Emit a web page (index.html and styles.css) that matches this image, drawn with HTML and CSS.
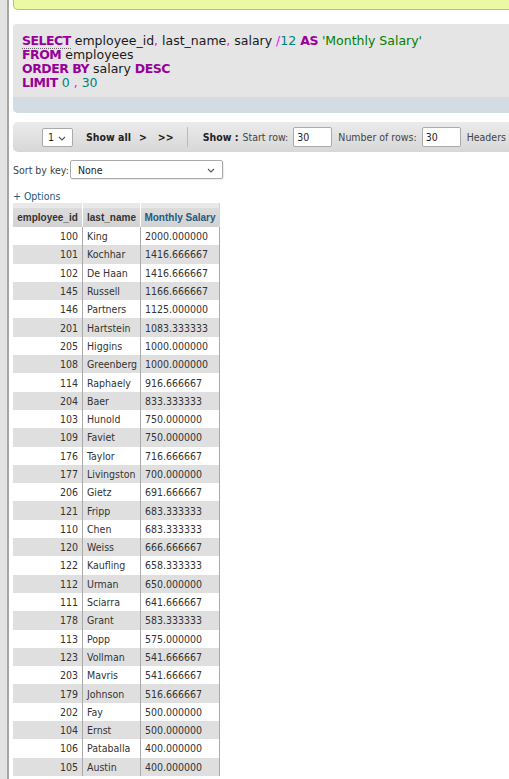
FILE: index.html
```html
<!DOCTYPE html>
<html>
<head>
<meta charset="utf-8">
<link rel="stylesheet" href="styles.css">
</head>
<body>
<div class="page">
  <div class="gutter"></div>
  <div class="main">
    <div class="msg"></div>
    <div class="sqlbox">
      <div class="sql">
        <div><span class="kw sel">SELECT</span> employee_id<span class="pu">,</span> last_name<span class="pu">,</span> salary <span class="pu">/</span><span class="nu">12</span> <span class="kw">AS</span> <span class="st">'Monthly Salary'</span></div>
        <div><span class="kw">FROM</span> employees</div>
        <div><span class="kw">ORDER BY</span> salary <span class="kw">DESC</span></div>
        <div><span class="kw">LIMIT</span> <span class="nu">0</span> <span class="pu">,</span> <span class="nu">30</span></div>
      </div>
      <div class="sqlfoot"></div>
    </div>

    <div class="navbar">
      <span class="dd dd-page">1<svg class="chev" width="8" height="5" viewBox="0 0 8 5"><path d="M1 1 L4 4 L7 1" fill="none" stroke="#555" stroke-width="1.1"/></svg></span>
      <span class="b showall">Show all</span>
      <span class="b nx">&gt;</span>
      <span class="b nx2">&gt;&gt;</span>
      <span class="sep"></span>
      <span class="b showlbl">Show :</span>
      <span class="lbl startlbl">Start row:</span>
      <span class="inp inp1">30</span>
      <span class="lbl numlbl">Number of rows:</span>
      <span class="inp inp2">30</span>
      <span class="lbl hdrlbl">Headers every</span>
    </div>

    <div class="sortrow">
      <span class="lbl">Sort by key:</span>
      <span class="dd dd-sort">None<svg class="chev" width="8" height="5" viewBox="0 0 8 5"><path d="M1 1 L4 4 L7 1" fill="none" stroke="#555" stroke-width="1.1"/></svg></span>
    </div>

    <div class="options">+ Options</div>

    <table class="res">
      <colgroup><col class="c1"><col class="c2"><col class="c3"></colgroup>
      <thead>
        <tr><th class="plain">employee_id</th><th class="plain">last_name</th><th class="link">Monthly Salary</th></tr>
      </thead>
      <tbody>
        <tr><td class="r">100</td><td>King</td><td>2000.000000</td></tr>
        <tr><td class="r">101</td><td>Kochhar</td><td>1416.666667</td></tr>
        <tr><td class="r">102</td><td>De Haan</td><td>1416.666667</td></tr>
        <tr><td class="r">145</td><td>Russell</td><td>1166.666667</td></tr>
        <tr><td class="r">146</td><td>Partners</td><td>1125.000000</td></tr>
        <tr><td class="r">201</td><td>Hartstein</td><td>1083.333333</td></tr>
        <tr><td class="r">205</td><td>Higgins</td><td>1000.000000</td></tr>
        <tr><td class="r">108</td><td>Greenberg</td><td>1000.000000</td></tr>
        <tr><td class="r">114</td><td>Raphaely</td><td>916.666667</td></tr>
        <tr><td class="r">204</td><td>Baer</td><td>833.333333</td></tr>
        <tr><td class="r">103</td><td>Hunold</td><td>750.000000</td></tr>
        <tr><td class="r">109</td><td>Faviet</td><td>750.000000</td></tr>
        <tr><td class="r">176</td><td>Taylor</td><td>716.666667</td></tr>
        <tr><td class="r">177</td><td>Livingston</td><td>700.000000</td></tr>
        <tr><td class="r">206</td><td>Gietz</td><td>691.666667</td></tr>
        <tr><td class="r">121</td><td>Fripp</td><td>683.333333</td></tr>
        <tr><td class="r">110</td><td>Chen</td><td>683.333333</td></tr>
        <tr><td class="r">120</td><td>Weiss</td><td>666.666667</td></tr>
        <tr><td class="r">122</td><td>Kaufling</td><td>658.333333</td></tr>
        <tr><td class="r">112</td><td>Urman</td><td>650.000000</td></tr>
        <tr><td class="r">111</td><td>Sciarra</td><td>641.666667</td></tr>
        <tr><td class="r">178</td><td>Grant</td><td>583.333333</td></tr>
        <tr><td class="r">113</td><td>Popp</td><td>575.000000</td></tr>
        <tr><td class="r">123</td><td>Vollman</td><td>541.666667</td></tr>
        <tr><td class="r">203</td><td>Mavris</td><td>541.666667</td></tr>
        <tr><td class="r">179</td><td>Johnson</td><td>516.666667</td></tr>
        <tr><td class="r">202</td><td>Fay</td><td>500.000000</td></tr>
        <tr><td class="r">104</td><td>Ernst</td><td>500.000000</td></tr>
        <tr><td class="r">106</td><td>Pataballa</td><td>400.000000</td></tr>
        <tr><td class="r">105</td><td>Austin</td><td>400.000000</td></tr>
      </tbody>
    </table>
  </div>
</div>
</body>
</html>
```

FILE: styles.css
```css
html, body {
  margin: 0;
  padding: 0;
  overflow: hidden;
  background: #fff;
}
body {
  font-family: "DejaVu Sans Condensed", "Liberation Sans", sans-serif;
  font-size: 10.5px;
  color: #333;
}
.page {
  display: flex;
  min-height: 800px;
}
.gutter {
  flex: none;
  width: 7px;
  background: #e3e3e3;
  border-right: 2px solid #a6a6a6;
}
.main {
  flex: 1;
  min-width: 0;
  padding-left: 4px;
  overflow: hidden;
}
.msg {
  width: 700px;
  height: 9px;
  background: #ebf8a4;
  border: 1px solid #a2d246;
  border-top: none;
  border-radius: 0 0 0 5px;
}
.sqlbox {
  margin-top: 14px;
  width: 700px;
  background: #e5e5e5;
  border-radius: 4px 0 0 5px;
  overflow: hidden;
}
.sql {
  padding: 10px 9px 7px;
  font-family: "DejaVu Sans", sans-serif;
  font-size: 12.5px;
  line-height: 14px;
  color: #1a1a1a;
  white-space: nowrap;
}
.kw { color: #990099; font-weight: bold; letter-spacing: -0.5px; }
.sel { border-bottom: 1px dotted #666; }
.pu { color: #ff00ff; }
.nu { color: #008080; }
.st { color: #008000; }
.sqlfoot {
  height: 16px;
  background: #d3dce3;
}
.navbar {
  margin-top: 9px;
  width: 700px;
  height: 30px;
  background: linear-gradient(#ebebeb, #d7d7d7);
  border-radius: 5px 0 0 5px;
  display: flex;
  align-items: center;
  white-space: nowrap;
  font-size: 10.5px;
}
.b { font-weight: bold; color: #222; }
.lbl { color: #444; }
.dd {
  position: relative;
  box-sizing: border-box;
  display: flex;
  align-items: center;
  background: #fff;
  border: 1px solid #aaa;
  border-radius: 2px;
  color: #222;
}
.chev { position: absolute; top: 7px; }
.dd-page {
  margin-left: 29px;
  width: 31px;
  height: 19px;
  padding-left: 5px;
}
.dd-page .chev { right: 6px; }
.showall { margin-left: 13px; }
.nx { margin-left: 8px; }
.nx2 { margin-left: 11px; }
.sep {
  margin-left: 13px;
  width: 1px;
  height: 20px;
  background: #b5bcc2;
}
.showlbl { margin-left: 15px; }
.startlbl { margin-left: 4px; }
.inp {
  box-sizing: border-box;
  width: 39px;
  height: 20px;
  padding-left: 3px;
  background: #fff;
  border: 1px solid #aaa;
  border-radius: 2px;
  display: flex;
  align-items: center;
  color: #222;
}
.inp1 { margin-left: 5px; }
.inp2 { margin-left: 5px; }
.numlbl { margin-left: 6px; }
.hdrlbl { margin-left: 6px; }
.sortrow {
  margin-top: 8px;
  display: flex;
  align-items: center;
  height: 19px;
}
.dd-sort {
  margin-left: 1px;
  width: 153px;
  height: 19px;
  padding-left: 7px;
  box-shadow: 1px 1px 1px rgba(0,0,0,0.08);
}
.dd-sort .chev { right: 7px; }
.options {
  margin-top: 11px;
  line-height: 13px;
  color: #235a81;
}
.res {
  border-collapse: separate;
  border-spacing: 0;
  table-layout: fixed;
  width: 207px;
}
.c1 { width: 70px; }
.c2 { width: 58px; }
.c3 { width: 79px; }
.res thead tr { height: 24px; }
.res th {
  padding: 5px 0 0;
  font-family: "Liberation Sans", sans-serif;
  font-size: 10px;
  font-weight: bold;
  white-space: nowrap;
  text-align: center;
  background: linear-gradient(#e9e9e9 0, #e9e9e9 5px, #dcdcdc 5px, #d2d2d2 100%);
  border-right: 1px solid #fff;
  overflow: hidden;
}
.res th:last-child { border-right-color: #d4d4d4; }
.res th.plain { color: #333; }
.res th.link { color: #235a81; }
.res tbody tr { height: 18.31px; }
.res tbody tr:nth-child(even) { background: #dfdfdf; }
.res td {
  padding: 0 4px;
  line-height: 14px;
  border-right: 1px solid #aaa;
  white-space: nowrap;
  overflow: hidden;
}
.res td.r { text-align: right; }
```
